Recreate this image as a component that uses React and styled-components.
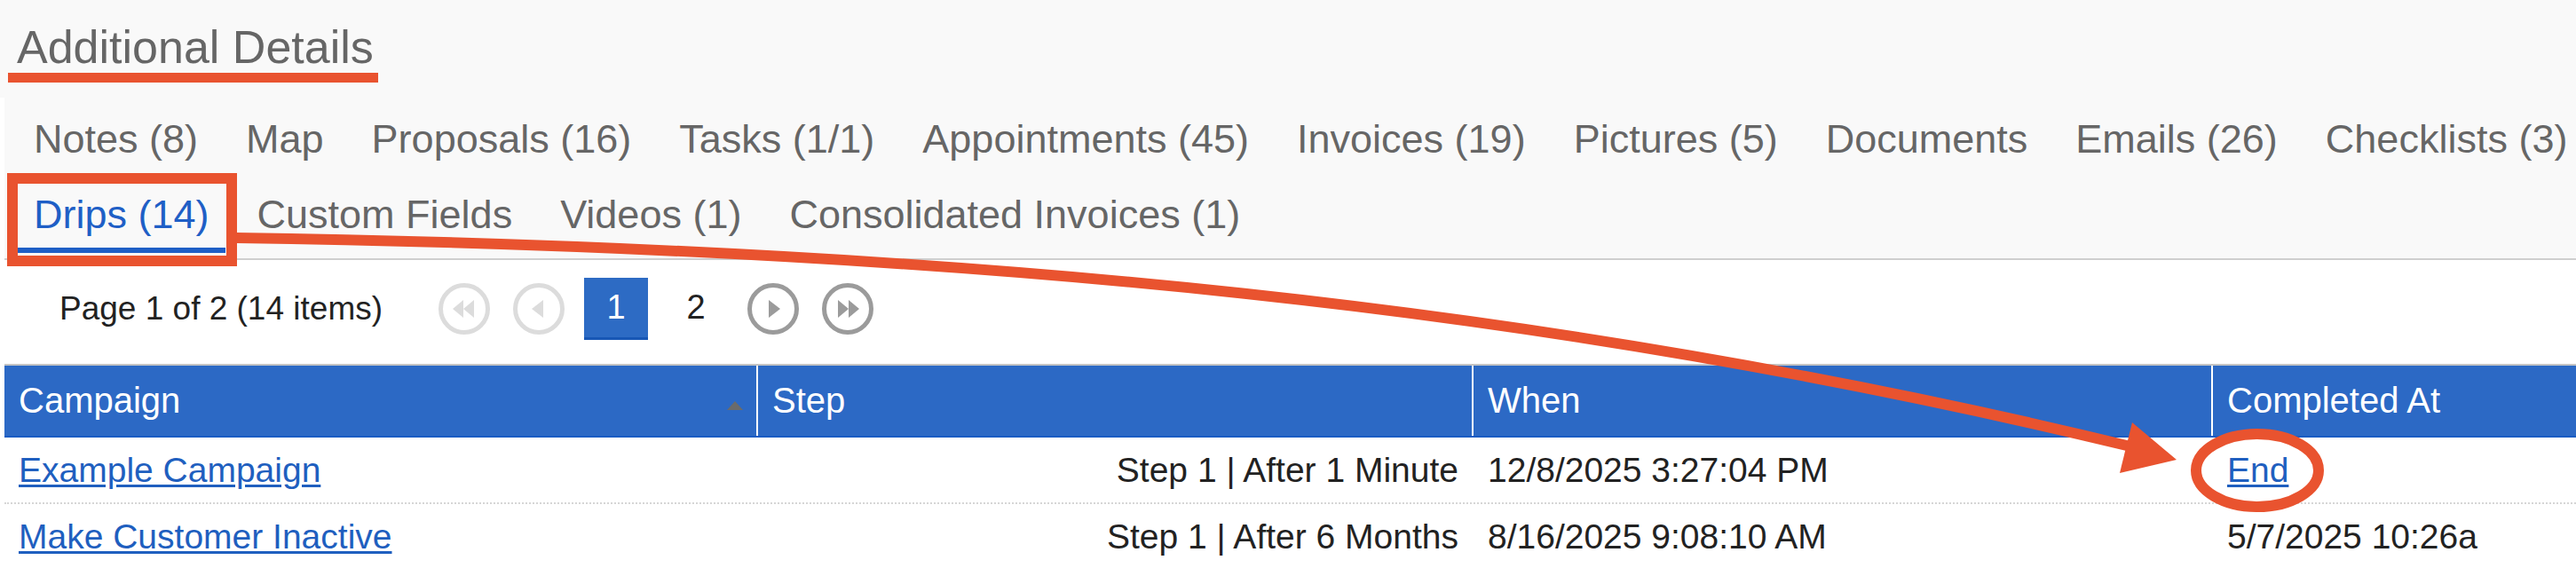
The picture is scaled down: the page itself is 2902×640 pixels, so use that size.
import React from "react";
import styled, { createGlobalStyle } from "styled-components";

const GlobalStyle = createGlobalStyle`
  html, body {
    margin: 0;
    padding: 0;
    background: #ffffff;
  }
  body {
    font-family: "Liberation Sans", Arial, sans-serif;
  }
`;

const ORANGE = "#e9532f";

const tabRows = [
  [
    "Notes (8)",
    "Map",
    "Proposals (16)",
    "Tasks (1/1)",
    "Appointments (45)",
    "Invoices (19)",
    "Pictures (5)",
    "Documents",
    "Emails (26)",
    "Checklists (3)",
  ],
  ["Drips (14)", "Custom Fields", "Videos (1)", "Consolidated Invoices (1)"],
];

const rows = [
  {
    campaign: "Example Campaign",
    step: "Step 1 | After 1 Minute",
    when: "12/8/2025 3:27:04 PM",
    completed: "End",
    completedLink: true,
  },
  {
    campaign: "Make Customer Inactive",
    step: "Step 1 | After 6 Months",
    when: "8/16/2025 9:08:10 AM",
    completed: "5/7/2025 10:26a",
  },
];

const PagerIcon = ({ dir, double, disabled }) => {
  const color = disabled ? "#dcdcdc" : "#9b9b9b";
  const flip = dir === "left" ? "translate(58 0) scale(-1 1)" : undefined;
  return (
    <svg width="58" height="58" viewBox="0 0 58 58">
      <circle cx="29" cy="29" r="26.5" fill="none" stroke={color} strokeWidth="5" />
      <g transform={flip} fill={color}>
        {double ? (
          <>
            <polygon points="18,19 30,29 18,39" />
            <polygon points="30,19 42,29 30,39" />
          </>
        ) : (
          <polygon points="24,19 37,29 24,39" />
        )}
      </g>
    </svg>
  );
};

const App = () => {
  return (
    <>
      <GlobalStyle />
      <Page>
        <TitleBar>
          <Title>Additional Details</Title>
        </TitleBar>

        <TabStrip>
          {tabRows.map((row, i) => (
            <TabRow key={i}>
              {row.map((label) => (
                <Tab key={label} $active={label === "Drips (14)"}>
                  {label}
                </Tab>
              ))}
            </TabRow>
          ))}
        </TabStrip>

        <Pager>
          <PagerInfo>Page 1 of 2 (14 items)</PagerInfo>
          <PageButton>
            <PagerIcon dir="left" double disabled />
          </PageButton>
          <PageButton>
            <PagerIcon dir="left" disabled />
          </PageButton>
          <PageNumber $current>1</PageNumber>
          <PageNumber>2</PageNumber>
          <PageButton>
            <PagerIcon dir="right" />
          </PageButton>
          <PageButton>
            <PagerIcon dir="right" double />
          </PageButton>
        </Pager>

        <Table>
          <HeadRow>
            <HeadCell>
              Campaign
              <SortArrow />
            </HeadCell>
            <HeadCell>Step</HeadCell>
            <HeadCell>When</HeadCell>
            <HeadCell>Completed At</HeadCell>
          </HeadRow>
          {rows.map((r) => (
            <Row key={r.campaign}>
              <Cell>
                <Link href="#">{r.campaign}</Link>
              </Cell>
              <Cell $align="right">{r.step}</Cell>
              <Cell>{r.when}</Cell>
              <Cell>
                {r.completedLink ? <Link href="#">{r.completed}</Link> : r.completed}
              </Cell>
            </Row>
          ))}
        </Table>

        <Marks width="2902" height="640" viewBox="0 0 2902 640">
          <rect x="9" y="82" width="417" height="11" fill={ORANGE} />
          <rect x="14" y="201" width="247" height="93" fill="none" stroke={ORANGE} strokeWidth="12" />
          <path
            d="M 266 268 C 1100 280, 1750 345, 2400 503"
            fill="none"
            stroke={ORANGE}
            strokeWidth="12"
          />
          <polygon points="2452,518 2402,476 2388,533" fill={ORANGE} />
          <ellipse cx="2543" cy="530" rx="69" ry="41" fill="none" stroke={ORANGE} strokeWidth="12" />
        </Marks>
      </Page>
    </>
  );
};

const Page = styled.div`
  position: relative;
  width: 2902px;
  height: 640px;
  overflow: hidden;
  background: #ffffff;
`;

const TitleBar = styled.div`
  background: #f9f9f9;
  padding: 25px 0 17px 9px;
`;

const Title = styled.h2`
  display: inline-block;
  margin: 0;
  padding: 0 10px 11px;
  font-size: 52px;
  line-height: 57px;
  font-weight: 400;
  color: #666666;
`;

const TabStrip = styled.div`
  display: flex;
  flex-direction: column;
  gap: 7px;
  margin-left: 5px;
  padding: 12px 0 6px 15px;
  background: #f9f9f9;
  border-bottom: 2px solid #cfcfcf;
`;

const TabRow = styled.div`
  display: flex;
`;

const Tab = styled.div`
  padding: 10px 18px 12px;
  margin-right: 18px;
  font-size: 45px;
  line-height: 50px;
  white-space: nowrap;
  color: ${(p) => (p.$active ? "#1f5fc6" : "#666666")};
  border-bottom: 6px solid ${(p) => (p.$active ? "#1f5fc6" : "transparent")};
`;

const Pager = styled.div`
  display: flex;
  align-items: center;
  padding: 20px 0 27px 67px;
`;

const PagerInfo = styled.span`
  font-size: 37px;
  color: #222222;
  margin-right: 50px;
`;

const PageButton = styled.span`
  display: flex;
  width: 58px;
  height: 58px;
  margin: 0 13px;
`;

const PageNumber = styled.span`
  display: flex;
  align-items: center;
  justify-content: center;
  box-sizing: border-box;
  width: 72px;
  height: 70px;
  margin: 0 9px;
  font-size: 38px;
  color: ${(p) => (p.$current ? "#ffffff" : "#222222")};
  background: ${(p) => (p.$current ? "#2d6bc4" : "transparent")};
  border-bottom: 3px solid ${(p) => (p.$current ? "#1857b5" : "transparent")};
`;

const Table = styled.div`
  margin-left: 5px;
  border-top: 2px solid #c4c4c4;
`;

const columns = "847px 804px 831px 1fr";

const HeadRow = styled.div`
  display: grid;
  grid-template-columns: ${columns};
  column-gap: 2px;
  background: #ffffff;
  border-bottom: 2px solid #1a5cc4;
`;

const HeadCell = styled.div`
  display: flex;
  align-items: center;
  justify-content: space-between;
  height: 79px;
  padding: 0 15px 0 16px;
  background: #2c69c5;
  color: #ffffff;
  font-size: 40px;
  white-space: nowrap;
`;

const SortArrow = styled.span`
  width: 0;
  height: 0;
  margin-top: 10px;
  border-left: 9px solid transparent;
  border-right: 9px solid transparent;
  border-bottom: 10px solid #6b6b6b;
`;

const Row = styled.div`
  display: grid;
  grid-template-columns: ${columns};
  column-gap: 2px;
  align-items: center;
  height: 73px;
  border-bottom: 2px dotted #d6d6d6;
  font-size: 39px;
  color: #222222;
`;

const Cell = styled.div`
  padding: 0 15px 0 16px;
  white-space: nowrap;
  text-align: ${(p) => p.$align || "left"};
`;

const Link = styled.a`
  color: #1f5fbf;
  text-decoration: underline;
  text-underline-offset: 3px;
`;

const Marks = styled.svg`
  position: absolute;
  top: 0;
  left: 0;
  pointer-events: none;
`;

export default App;
